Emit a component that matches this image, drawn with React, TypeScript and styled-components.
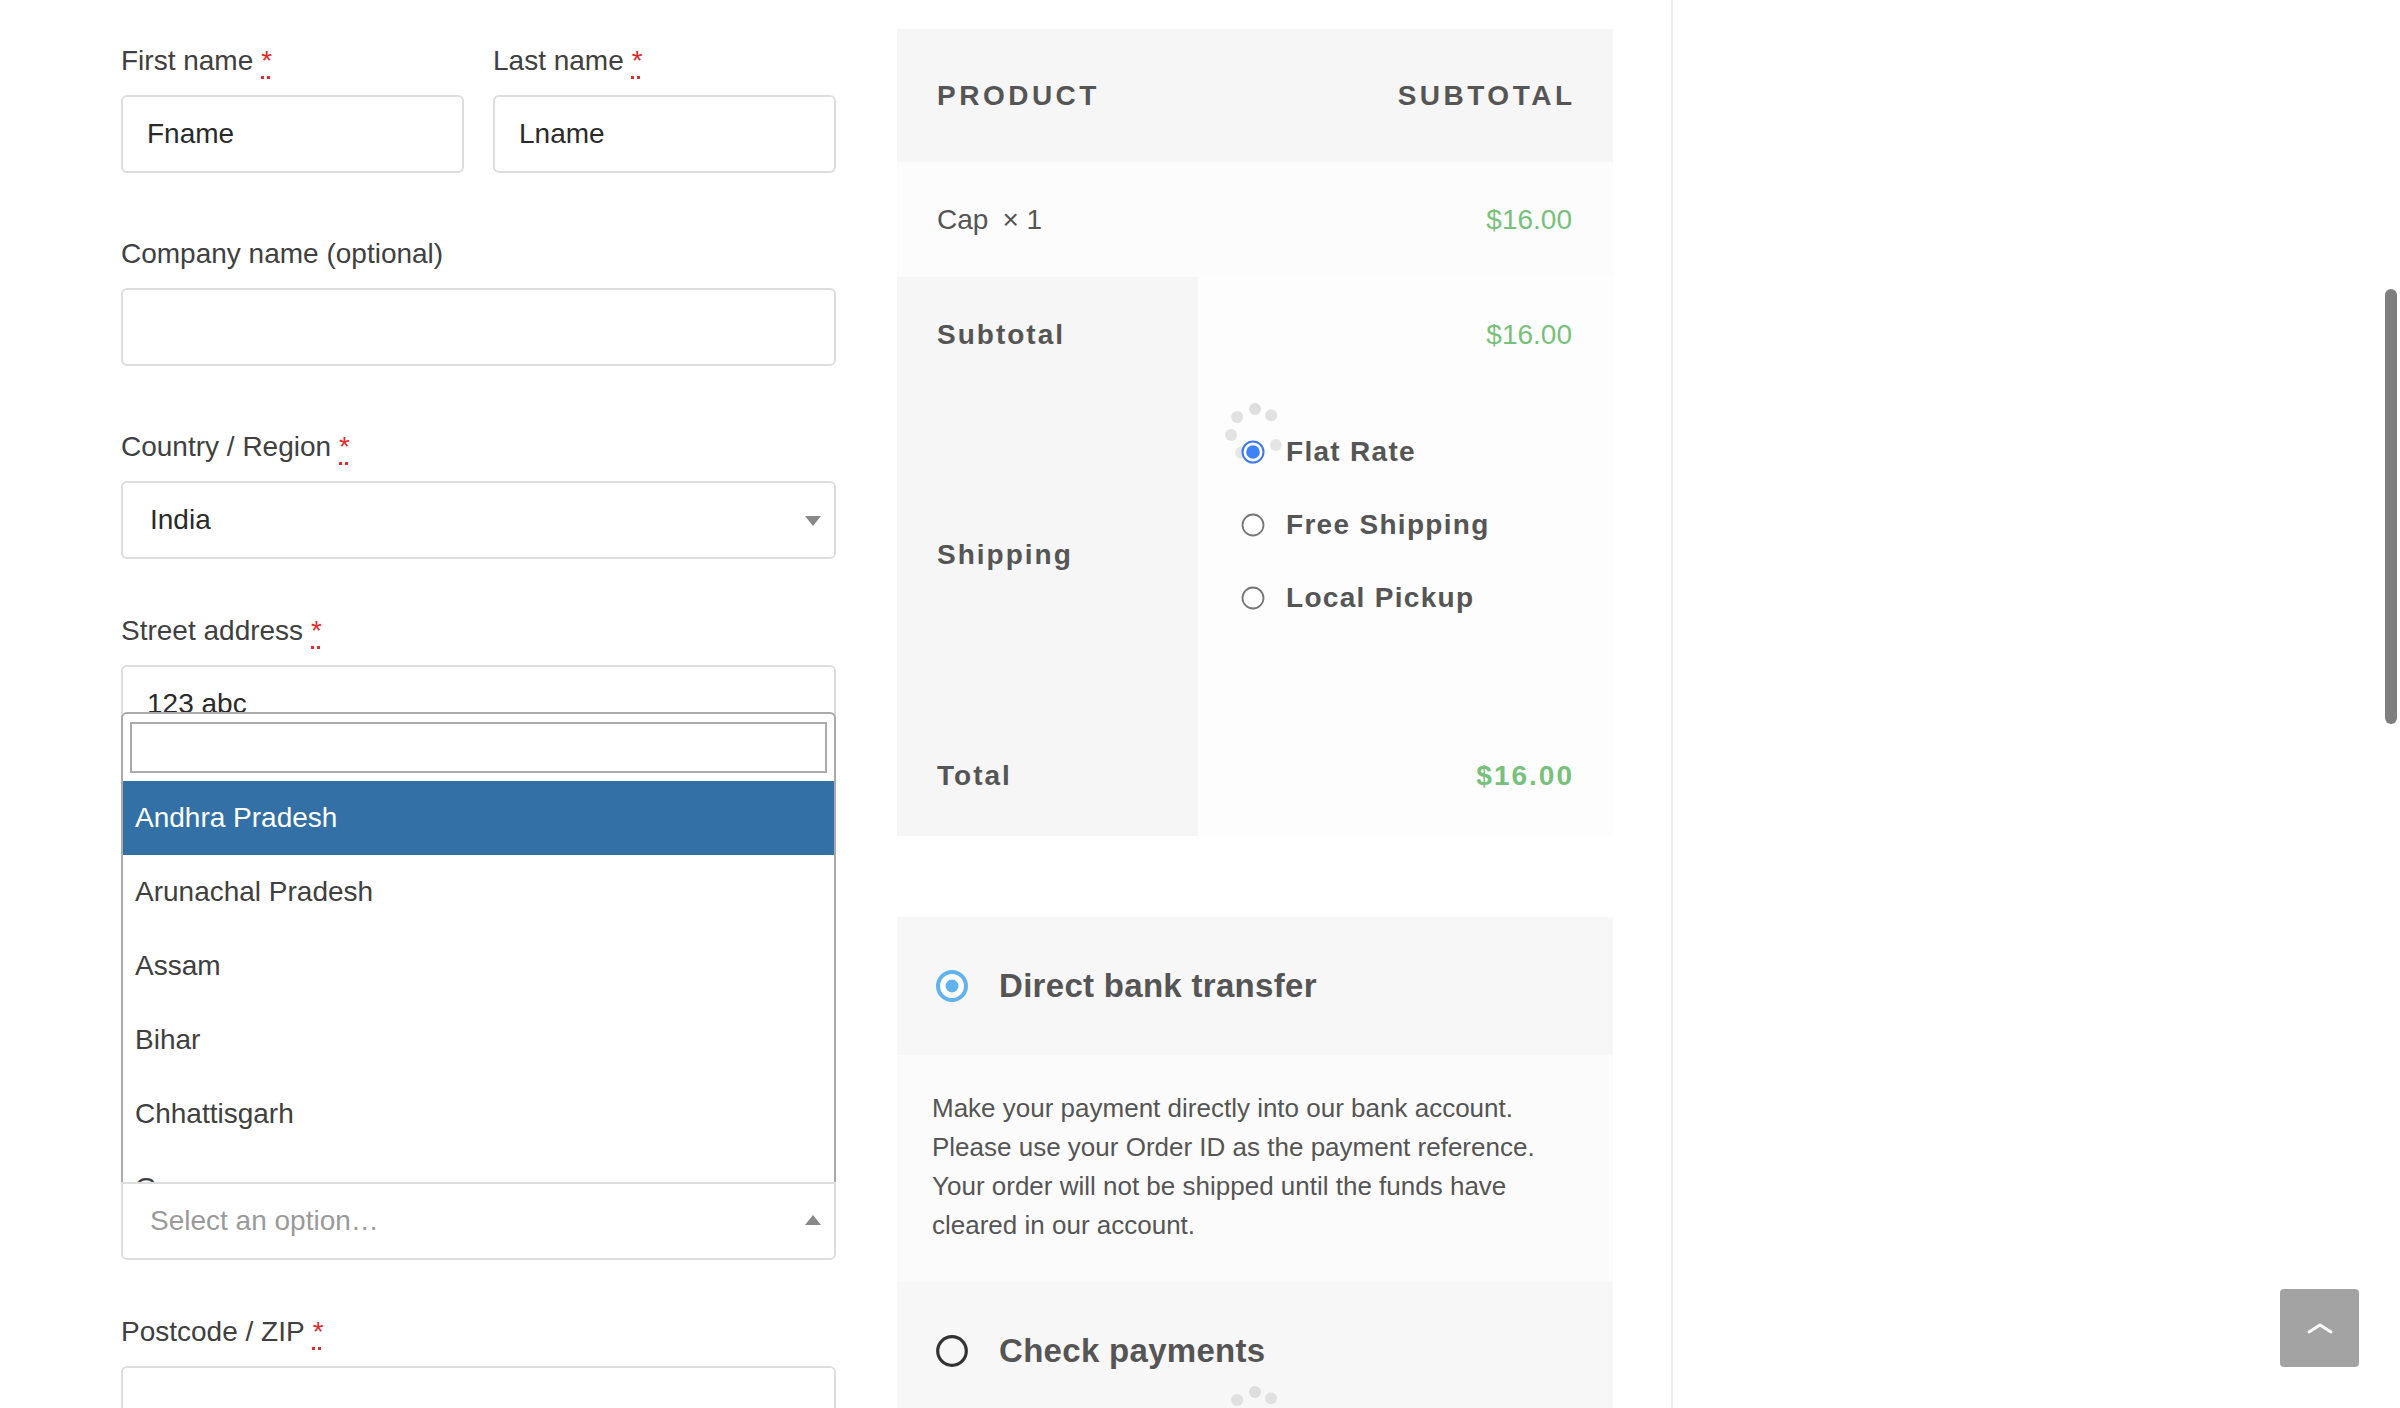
import React from 'react';
import styled, { createGlobalStyle } from 'styled-components';

const GlobalStyle = createGlobalStyle`
  html, body { margin: 0; padding: 0; background: #fff; }
  body { font-family: "Liberation Sans", Arial, Helvetica, sans-serif; }
  *, *::before, *::after { box-sizing: border-box; }
`;

const Page = styled.div`
  position: relative;
  width: 2400px;
  height: 1408px;
  overflow: hidden;
  display: flex;
  background: #fff;
`;

const Main = styled.main`
  display: flex;
  align-items: flex-start;
  gap: 61px;
  height: 100%;
  padding: 0 58px 0 121px;
  border-right: 2px solid #efefef;
`;

const Sidebar = styled.aside`
  flex: 1;
`;

/* ---------- Billing form ---------- */

const Form = styled.section`
  width: 715px;
  padding-top: 38px;
`;

const Field = styled.div<{ $gap?: number }>`
  margin-top: ${(p) => p.$gap ?? 0}px;
`;

const NameRow = styled.div`
  display: grid;
  grid-template-columns: 1fr 1fr;
  gap: 29px;
`;

const Label = styled.label`
  display: block;
  padding-top: 2px;
  font-size: 28px;
  line-height: 42px;
  color: #404040;
  margin-bottom: 13px;
`;

const Required = styled.abbr`
  color: #dd2c2c;
  text-decoration: underline dotted;
  text-decoration-thickness: 3px;
  text-underline-offset: 6px;
  margin-left: 8px;
`;

const InputBox = styled.div<{ $mt?: number }>`
  display: flex;
  align-items: center;
  height: 78px;
  margin-top: ${(p) => p.$mt ?? 0}px;
  padding: 0 24px;
  background: #fff;
  border: 2px solid #dddddd;
  border-radius: 6px;
  font-size: 28px;
  color: #2a2a2a;
  white-space: nowrap;
  overflow: hidden;
`;

const SelectWrap = styled.div`
  position: relative;
`;

const SelectBox = styled.div<{ $open?: boolean }>`
  display: flex;
  align-items: center;
  justify-content: space-between;
  height: 78px;
  padding: 0 13px 0 27px;
  background: #fff;
  border: 2px solid #dddddd;
  border-radius: ${(p) => (p.$open ? '0 0 6px 6px' : '6px')};
  font-size: 28px;
`;

const SelectValue = styled.span<{ $placeholder?: boolean }>`
  color: ${(p) => (p.$placeholder ? '#9a9a9a' : '#2a2a2a')};
`;

const Caret = styled.span<{ $up?: boolean }>`
  width: 0;
  height: 0;
  border-left: 8px solid transparent;
  border-right: 8px solid transparent;
  ${(p) =>
    p.$up
      ? 'border-bottom: 10px solid #888; margin-top: -2px;'
      : 'border-top: 10px solid #888; margin-top: 2px;'}
`;

const Dropdown = styled.div`
  position: absolute;
  left: 0;
  right: 0;
  bottom: 100%;
  z-index: 5;
  background: #fff;
  border: 2px solid #aaaaaa;
  border-bottom: none;
  border-radius: 6px 6px 0 0;
`;

const SearchWrap = styled.div`
  padding: 8px 7px;
`;

const SearchField = styled.div`
  height: 51px;
  border: 2px solid #aaaaaa;
  background: #fff;
`;

const OptionList = styled.ul`
  list-style: none;
  margin: 0;
  padding: 0;
  max-height: 401px;
  overflow: hidden;
`;

const OptionItem = styled.li<{ $active?: boolean }>`
  display: flex;
  align-items: center;
  height: 74px;
  padding: 0 12px;
  font-size: 28px;
  color: ${(p) => (p.$active ? '#fff' : '#404040')};
  background: ${(p) => (p.$active ? '#3270a5' : '#fff')};
`;

/* ---------- Order review ---------- */

const Review = styled.section`
  width: 716px;
  padding-top: 29px;
`;

const OrderTable = styled.div`
  position: relative;
`;

const HeadRow = styled.div`
  display: flex;
  align-items: center;
  justify-content: space-between;
  height: 133px;
  padding: 0 41px 0 40px;
  background: #f6f6f6;
`;

const HeadCell = styled.span<{ $end?: boolean }>`
  font-size: 28px;
  font-weight: 700;
  letter-spacing: 3.5px;
  color: #555;
  margin-right: ${(p) => (p.$end ? '-3.5px' : '0')};
`;

const ItemRow = styled.div`
  display: flex;
  align-items: center;
  justify-content: space-between;
  height: 115px;
  padding: 0 41px 0 40px;
  background: #fcfcfc;
  font-size: 28px;
  color: #555;
`;

const Qty = styled.span`
  margin-left: 14px;
`;

const Price = styled.span<{ $bold?: boolean }>`
  font-size: 28px;
  color: #78c17c;
  font-weight: ${(p) => (p.$bold ? 700 : 400)};
  letter-spacing: ${(p) => (p.$bold ? '2px' : '0')};
  margin-right: ${(p) => (p.$bold ? '-2px' : '0')};
`;

const TotalsRow = styled.div<{ $h: number }>`
  display: grid;
  grid-template-columns: 301px 1fr;
  height: ${(p) => p.$h}px;
`;

const ThCell = styled.div`
  display: flex;
  align-items: center;
  padding-left: 40px;
  background: #f6f6f6;
  font-size: 28px;
  font-weight: 700;
  letter-spacing: 2px;
  color: #555;
`;

const TdCell = styled.div`
  display: flex;
  align-items: center;
  justify-content: flex-end;
  padding-right: 41px;
  background: #fdfdfd;
`;

const ShippingCell = styled.ul`
  list-style: none;
  margin: 0;
  padding: 22px 0 0 43px;
  background: #fdfdfd;
`;

const ShippingOption = styled.li`
  position: relative;
  z-index: 2;
  display: flex;
  align-items: center;
  gap: 21px;
  height: 73px;
  font-size: 28px;
  font-weight: 700;
  letter-spacing: 1.3px;
  color: #555;
`;

const Payment = styled.div`
  position: relative;
  margin-top: 81px;
`;

const PaymentHeader = styled.div`
  display: flex;
  align-items: center;
  gap: 31px;
  height: 138px;
  padding-left: 39px;
  background: #f7f7f7;
`;

const PaymentTitle = styled.span`
  font-size: 33px;
  font-weight: 700;
  letter-spacing: 0.3px;
  color: #555;
`;

const PaymentDesc = styled.p`
  margin: 0;
  padding: 34px 35px 37px;
  background: #fbfbfb;
  font-size: 26px;
  line-height: 39px;
  color: #555;
`;

const SpinnerBox = styled.div<{ $top: string }>`
  position: absolute;
  left: 50%;
  top: ${(p) => p.$top};
  width: 64px;
  height: 64px;
  margin: -32px 0 0 -32px;
  z-index: 1;
  pointer-events: none;
`;

/* ---------- Overlays ---------- */

const BackToTop = styled.button`
  position: absolute;
  right: 41px;
  bottom: 41px;
  width: 79px;
  height: 78px;
  display: flex;
  align-items: center;
  justify-content: center;
  padding: 0;
  border: none;
  border-radius: 4px;
  background: #a3a3a3;
`;

const ScrollThumb = styled.div`
  position: absolute;
  right: 3px;
  top: 289px;
  width: 12px;
  height: 435px;
  border-radius: 6px;
  background: #7f7f7f;
`;

/* ---------- Drawings ---------- */

const NativeRadio = ({ checked }: { checked?: boolean }) => (
  <svg width="24" height="24" viewBox="0 0 24 24" style={{ flex: 'none' }}>
    {checked ? (
      <>
        <circle cx="12" cy="12" r="10.5" fill="#fff" stroke="#3a7bf0" strokeWidth="2" />
        <circle cx="12" cy="12" r="6.8" fill="#3f82f6" />
      </>
    ) : (
      <circle cx="12" cy="12" r="10.5" fill="#fff" stroke="#767676" strokeWidth="1.8" />
    )}
  </svg>
);

const PayRadio = ({ checked }: { checked?: boolean }) => (
  <svg width="32" height="32" viewBox="0 0 32 32" style={{ flex: 'none' }}>
    {checked ? (
      <>
        <circle cx="16" cy="16" r="14" fill="#fff" stroke="#62b2ec" strokeWidth="4" />
        <circle cx="16" cy="16" r="6.5" fill="#62b2ec" />
      </>
    ) : (
      <circle cx="16" cy="16" r="14.3" fill="none" stroke="#333" strokeWidth="3.2" />
    )}
  </svg>
);

const spinnerDots = [
  { a: -90, o: 0.95 },
  { a: -48, o: 0.85 },
  { a: -138, o: 0.85 },
  { a: 175, o: 0.8 },
  { a: 30, o: 0.75 },
  { a: 125, o: 0.7 },
];

const Spinner = ({ top }: { top: string }) => (
  <SpinnerBox $top={top}>
    <svg width="64" height="64" viewBox="0 0 64 64">
      {spinnerDots.map((d) => {
        const r = (d.a * Math.PI) / 180;
        return (
          <circle
            key={d.a}
            cx={32 + 24 * Math.cos(r)}
            cy={32 + 24 * Math.sin(r)}
            r="6"
            fill="#dcdcdc"
            opacity={d.o}
          />
        );
      })}
    </svg>
  </SpinnerBox>
);

const ChevronUp = () => (
  <svg width="30" height="18" viewBox="0 0 30 18">
    <path d="M4 13 L15 6 L26 13" fill="none" stroke="#fff" strokeWidth="3" strokeLinecap="round" strokeLinejoin="round" />
  </svg>
);

const states = ['Andhra Pradesh', 'Arunachal Pradesh', 'Assam', 'Bihar', 'Chhattisgarh', 'Goa', 'Gujarat'];

const Req = () => <Required title="required">*</Required>;

export default function App() {
  return (
    <>
      <GlobalStyle />
      <Page>
        <Main>
          <Form>
            <NameRow>
              <Field>
                <Label>First name<Req /></Label>
                <InputBox>Fname</InputBox>
              </Field>
              <Field>
                <Label>Last name<Req /></Label>
                <InputBox>Lname</InputBox>
              </Field>
            </NameRow>

            <Field $gap={58}>
              <Label>Company name (optional)</Label>
              <InputBox />
            </Field>

            <Field $gap={58}>
              <Label>Country / Region<Req /></Label>
              <SelectBox>
                <SelectValue>India</SelectValue>
                <Caret />
              </SelectBox>
            </Field>

            <Field $gap={49}>
              <Label>Street address<Req /></Label>
              <InputBox>123 abc</InputBox>
              <InputBox $mt={40} />
            </Field>

            <Field $gap={66}>
              <Label>Town / City<Req /></Label>
              <InputBox />
            </Field>

            <Field $gap={63}>
              <Label>State<Req /></Label>
              <SelectWrap>
                <Dropdown>
                  <SearchWrap>
                    <SearchField />
                  </SearchWrap>
                  <OptionList>
                    {states.map((s, i) => (
                      <OptionItem key={s} $active={i === 0}>
                        {s}
                      </OptionItem>
                    ))}
                  </OptionList>
                </Dropdown>
                <SelectBox $open>
                  <SelectValue $placeholder>Select an option…</SelectValue>
                  <Caret $up />
                </SelectBox>
              </SelectWrap>
            </Field>

            <Field $gap={49}>
              <Label>Postcode / ZIP<Req /></Label>
              <InputBox />
            </Field>
          </Form>

          <Review>
            <OrderTable>
              <HeadRow>
                <HeadCell>PRODUCT</HeadCell>
                <HeadCell $end>SUBTOTAL</HeadCell>
              </HeadRow>
              <ItemRow>
                <span>
                  Cap<Qty>×&nbsp;1</Qty>
                </span>
                <Price>$16.00</Price>
              </ItemRow>
              <TotalsRow $h={116}>
                <ThCell>Subtotal</ThCell>
                <TdCell>
                  <Price>$16.00</Price>
                </TdCell>
              </TotalsRow>
              <TotalsRow $h={323}>
                <ThCell>Shipping</ThCell>
                <ShippingCell>
                  <ShippingOption>
                    <NativeRadio checked />
                    Flat Rate
                  </ShippingOption>
                  <ShippingOption>
                    <NativeRadio />
                    Free Shipping
                  </ShippingOption>
                  <ShippingOption>
                    <NativeRadio />
                    Local Pickup
                  </ShippingOption>
                </ShippingCell>
              </TotalsRow>
              <TotalsRow $h={120}>
                <ThCell>Total</ThCell>
                <TdCell>
                  <Price $bold>$16.00</Price>
                </TdCell>
              </TotalsRow>
              <Spinner top="50%" />
            </OrderTable>

            <Payment>
              <PaymentHeader>
                <PayRadio checked />
                <PaymentTitle>Direct bank transfer</PaymentTitle>
              </PaymentHeader>
              <PaymentDesc>
                Make your payment directly into our bank account.
                <br />
                Please use your Order ID as the payment reference.
                <br />
                Your order will not be shipped until the funds have
                <br />
                cleared in our account.
              </PaymentDesc>
              <PaymentHeader>
                <PayRadio />
                <PaymentTitle>Check payments</PaymentTitle>
              </PaymentHeader>
              <Spinner top="499px" />
            </Payment>
          </Review>
        </Main>
        <Sidebar />
        <ScrollThumb />
        <BackToTop aria-label="Back to top">
          <ChevronUp />
        </BackToTop>
      </Page>
    </>
  );
}
